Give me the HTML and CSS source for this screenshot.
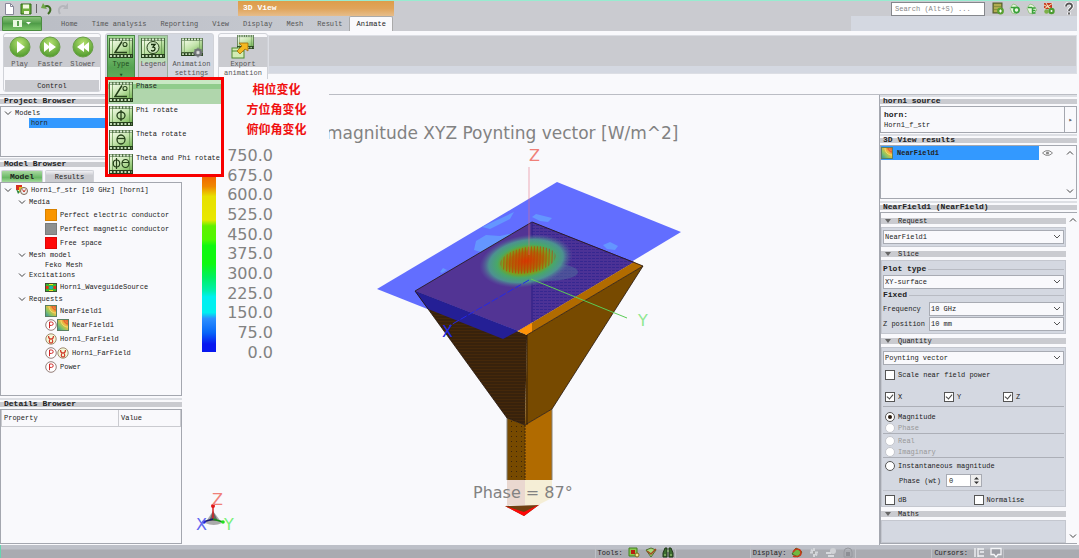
FILE: index.html
```
<!DOCTYPE html>
<html lang="en">
<head>
<meta charset="utf-8">
<title>3D View</title>
<link rel="stylesheet" href="styles.css">
</head>
<body>
<svg class="defs" aria-hidden="true">
  <defs>
    <linearGradient id="greenFill" x1="0" y1="0" x2="1" y2="1"><stop offset="0" stop-color="#f4fbe8"/><stop offset=".5" stop-color="#c4e4ac"/><stop offset="1" stop-color="#78b858"/></linearGradient>
    <radialGradient id="ball" cx=".5" cy=".3" r=".7"><stop offset="0" stop-color="#b4e070"/><stop offset="1" stop-color="#4f9a2c"/></radialGradient>
    <linearGradient id="nf" x1="0" y1="1" x2="1" y2="0"><stop offset="0" stop-color="#2f8fa8"/><stop offset=".35" stop-color="#8fc860"/><stop offset=".6" stop-color="#f0b840"/><stop offset="1" stop-color="#e04830"/></linearGradient>
    <symbol id="film" viewBox="0 0 24 20">
      <rect y="0" width="24" height="20" fill="#46683a"/>
      <rect x="1" y="3" width="22" height="13" fill="url(#greenFill)"/>
      <path d="M1 1.500h22" stroke="#dcecd4" stroke-width="2" stroke-dasharray="2.200 1.100"/>
      <rect y="16" width="24" height="4" fill="#26401c"/>
      <path d="M1 18h22" stroke="#c4dcb8" stroke-width="2" stroke-dasharray="2 1.600"/>
      <path d="M3.500 3v13M20.500 3v13" stroke="#6c9a58" stroke-width=".8"/>
    </symbol>
    <symbol id="angle" viewBox="0 0 24 20">
      <use href="#film" width="24" height="20"/>
      <path d="M13 3.500L6 14.500h12" fill="none" stroke="#25401a" stroke-width="1.500"/>
      <circle cx="16" cy="6.500" r="2" fill="none" stroke="#25401a" stroke-width="1.100"/>
    </symbol>
    <symbol id="nearfield" viewBox="0 0 12 12">
      <rect x=".5" y=".5" width="11" height="11" fill="url(#nf)" stroke="#5a8060"/>
      <path d="M4 1c0 4 3 7 7 7" fill="none" stroke="#f0e070"/><path d="M7 1c0 2 2 4 4 4" fill="none" stroke="#e05030"/>
    </symbol>
    <symbol id="power" viewBox="0 0 12 12">
      <circle cx="6" cy="6" r="5.300" fill="#fff" stroke="#7a6058" stroke-width=".8"/>
      <path d="M4.500 9.200V3h2a1.700 1.700 0 0 1 0 3.400h-2" fill="none" stroke="#d02828"/>
    </symbol>
    <symbol id="farfield" viewBox="0 0 12 12">
      <circle cx="6" cy="6" r="5.200" fill="#f4f8d8" stroke="#8a7050" stroke-width=".8"/>
      <path d="M3.500 3c0 3 1.500 3 2.500 3s2.500 0 2.500-3M6 6c-2 0-2.500 4 0 4s2-4 0-4" fill="none" stroke="#d03828" stroke-width="1.200"/>
    </symbol>
    <symbol id="chev" viewBox="0 0 8 6"><path d="M1 1.500l3 3 3-3" fill="none" stroke="#444"/></symbol>
  </defs>
</svg>

<header>
  <div class="titlebar">
    <nav class="quick" aria-label="Quick access">
      <button aria-label="New"><svg width="12" height="12" viewBox="0 0 12 12"><path d="M1.500 .5h5l3 3v8h-8z" fill="#fff" stroke="#889"/><path d="M6.500 .5v3h3" fill="none" stroke="#889"/></svg></button>
      <button aria-label="Save"><svg width="12" height="12" viewBox="0 0 12 12"><path d="M1 1h10v10H1z" fill="#6fae3c" stroke="#2f6818"/><path d="M3 1.500h6v4H3zM4 8h5v3H4z" fill="#f4f8e0"/></svg></button>
      <span class="quick-rule"></span>
      <button aria-label="Undo"><svg width="12" height="12" viewBox="0 0 12 12"><path d="M3 4c5-3 9 2 4 7" fill="none" stroke="#3c6c20" stroke-width="2"/><path d="M0 5l2-5 4 6z" fill="#6fa848"/></svg></button>
      <button aria-label="Redo"><svg width="12" height="12" viewBox="0 0 12 12"><path d="M9 4c-5-3-9 2-6 7" fill="none" stroke="#b4b6bb" stroke-width="2"/><path d="M11 0v6H6z" fill="#b4b6bb"/></svg></button>
    </nav>
    <h1 class="context-title">3D View</h1>
    <div class="titlebar-right">
      <input class="search" type="text" aria-label="Search" placeholder="Search (Alt+S) ...">
      <button aria-label="Calculator"><svg width="12" height="13" viewBox="0 0 12 13"><rect x="1" y="1" width="9" height="10" fill="#8a9040" stroke="#505a28"/><path d="M2 3h7M2 6h7M2 9h7" stroke="#d8c860"/><circle cx="8.500" cy="9" r="3.400" fill="#58a030"/><path d="M8.500 7.500v3M7 9h3" stroke="#fff"/></svg></button>
      <button aria-label="CADFEKO"><svg width="12" height="13" viewBox="0 0 12 13"><path d="M1 6l3-4 3 1 4 5-4 4-4-1z" fill="#e8f6e0" stroke="#9cc48c"/><circle cx="7.500" cy="8" r="2.600" fill="none" stroke="#38a038" stroke-width="1.600"/><path d="M2 5.500h4" stroke="#38a038" stroke-width="1.500"/></svg></button>
      <button aria-label="EDITFEKO"><svg width="12" height="13" viewBox="0 0 12 13"><path d="M1 6l3-4 3 1 4 5-4 4-4-1z" fill="#e8f6e0" stroke="#9cc48c"/><path d="M9.500 6h-3v5h3M6.500 8.500h3M2 5.500h4" fill="none" stroke="#38a038" stroke-width="1.500"/></svg></button>
      <button aria-label="Run"><svg width="12" height="13" viewBox="0 0 12 13"><path d="M1 1h8v6H1z" fill="#c83820"/><path d="M1 3l8 4M3 1l5 8M1 7l9-6" stroke="#f0e8c0"/><circle cx="8.500" cy="9" r="3.200" fill="#4c9c30"/><circle cx="3.500" cy="9.500" r="2.200" fill="#7cb048"/><circle cx="8.500" cy="9" r="1" fill="#fff"/></svg></button>
      <button class="help" aria-label="Help"><svg width="10" height="13" viewBox="0 0 10 13"><path d="M2 4.500C2 .5 8.500 .5 8 4.500 8 6.500 5 6.500 5 9M5 10.500v2" fill="none" stroke="#fff" stroke-width="3.500"/><path d="M2 4.500C2 .5 8.500 .5 8 4.500 8 6.500 5 6.500 5 9M5 10.500v2" fill="none" stroke="#555" stroke-width="1.800"/></svg></button>
    </div>
  </div>
  <nav class="tabs" aria-label="Ribbon tabs">
    <button class="app-button" aria-label="Application menu"><svg width="20" height="9" viewBox="0 0 20 9"><path d="M1 1h9v7H1z" fill="#e8f8e0"/><path d="M6 2v5" stroke="#58a050" stroke-width="2"/><path d="M14 3h5l-2.500 2.500z" fill="#fff"/></svg></button>
    <a href="#home">Home</a><a href="#time">Time analysis</a><a href="#reporting">Reporting</a><a href="#view">View</a><a href="#display">Display</a><a href="#mesh">Mesh</a><a href="#result">Result</a><a href="#animate" class="active">Animate</a>
    <span class="tabs-rest"></span>
  </nav>
  <div class="ribbon">
    <section class="group control">
      <div class="tools">
        <button><svg width="22" height="22" viewBox="0 0 22 22"><circle cx="11" cy="11" r="10" fill="url(#ball)" stroke="#6aa048"/><path d="M8 5l8 6-8 6z" fill="#fff"/></svg>Play</button>
        <button><svg width="22" height="22" viewBox="0 0 22 22"><circle cx="11" cy="11" r="10" fill="url(#ball)" stroke="#6aa048"/><path d="M5 6l5 4V6l7 5-7 5v-4l-5 4z" fill="#fff"/></svg>Faster</button>
        <button><svg width="22" height="22" viewBox="0 0 22 22"><circle cx="11" cy="11" r="10" fill="url(#ball)" stroke="#6aa048"/><path d="M17 6l-5 4V6l-7 5 7 5v-4l5 4z" fill="#fff"/></svg>Slower</button>
      </div>
      <h2>Control</h2>
    </section>
    <section class="group settings">
      <button class="type"><svg width="24" height="20"><use href="#angle" width="24" height="20"/></svg>Type<span class="caret">▾</span></button>
      <button class="legend"><svg width="24" height="20" viewBox="0 0 24 20"><use href="#film" width="24" height="20"/><circle cx="12" cy="9.500" r="6" fill="#cfe8c0" stroke="#25401a"/><path d="M10 6.500h4l-2 2.500c3 0 2.500 4-.5 4l-1.500-.6" fill="none" stroke="#18300f" stroke-width="1.300"/></svg>Legend</button>
      <button class="anim"><svg width="24" height="20" viewBox="0 0 24 20"><use href="#film" width="24" height="18"/><circle cx="18" cy="14.500" r="3" fill="#ddd" stroke="#707478" stroke-width="2"/><path d="M18 9.500v10M13 14.500h10M14.500 11l7 7M21.500 11l-7 7" stroke="#707478"/><circle cx="18" cy="14.500" r="1.500" fill="#ddd"/></svg>Animation settings</button>
    </section>
    <section class="group export">
      <button><svg width="24" height="24" viewBox="0 0 24 24"><use href="#film" x="5" width="19" height="14"/><rect x="1" y="13" width="12" height="10" fill="#d4ecb4" stroke="#4e8a30"/><path d="M1 16h12" stroke="#4e8a30"/><path d="M6 16l5-5-3-3h9v8l-3-2-5 5z" fill="#f4b820" stroke="#a06c10" stroke-width=".8"/></svg>Export animation</button>
    </section>
    <div class="ribbon-rest"></div>
  </div>
  <div class="menu" role="menu">
    <button class="hot" role="menuitem"><svg width="24" height="20"><use href="#angle" width="24" height="20"/></svg>Phase</button>
    <button role="menuitem"><svg width="24" height="20" viewBox="0 0 24 20"><use href="#film" width="24" height="20"/><ellipse cx="12" cy="9.500" rx="4" ry="3.500" fill="none" stroke="#25401a" stroke-width="1.300"/><path d="M12 4v11" stroke="#25401a" stroke-width="1.300"/></svg>Phi rotate</button>
    <button role="menuitem"><svg width="24" height="20" viewBox="0 0 24 20"><use href="#film" width="24" height="20"/><ellipse cx="12" cy="9.500" rx="4" ry="4.500" fill="none" stroke="#25401a" stroke-width="1.300"/><path d="M8 8.500h8" stroke="#25401a" stroke-width="1.300"/></svg>Theta rotate</button>
    <button role="menuitem"><svg width="24" height="20" viewBox="0 0 24 20"><use href="#film" width="24" height="20"/><ellipse cx="7.500" cy="9.500" rx="3.200" ry="3.500" fill="none" stroke="#25401a" stroke-width="1.200"/><ellipse cx="16.500" cy="9.500" rx="3.500" ry="4" fill="none" stroke="#25401a" stroke-width="1.200"/><path d="M7.500 4v11M13 8.500h7" stroke="#25401a" stroke-width="1.200"/></svg>Theta and Phi rotate</button>
  </div>
  <div class="notes" lang="zh"><p>相位变化</p><p>方位角变化</p><p>俯仰角变化</p></div>
</header>

<main>
  <aside class="dock left">
    <h2 class="dock-title">Project Browser</h2>
    <ul class="box project">
      <li class="line"><svg class="chev"><use href="#chev"/></svg>Models</li>
      <li class="line chosen">horn</li>
    </ul>
    <h2 class="dock-title model-title">Model Browser</h2>
    <div class="panel-tabs"><button class="on">Model</button><button>Results</button></div>
    <ul class="box tree">
      <li class="mid l0"><svg class="chev"><use href="#chev"/></svg><svg width="13" height="12" viewBox="0 0 13 12"><path d="M1 1h6v5H1z" fill="#d83020"/><path d="M4 3h5v5H4z" fill="#e8c020"/><path d="M1 5l4 3-2 2z" fill="#308840"/><circle cx="9" cy="7" r="3.500" fill="#eee" stroke="#806858"/><path d="M7.500 5.500L9 8l1.500-2.500" fill="none" stroke="#c83020"/></svg>Horn1_f_str [10 GHz] [horn1]</li>
      <li class="mid l1"><svg class="chev"><use href="#chev"/></svg>Media</li>
      <li class="tall l2"><i class="swatch pec"></i>Perfect electric conductor</li>
      <li class="tall l2"><i class="swatch pmc"></i>Perfect magnetic conductor</li>
      <li class="tall l2"><i class="swatch free"></i>Free space</li>
      <li class="line l1"><svg class="chev"><use href="#chev"/></svg>Mesh model</li>
      <li class="line l2">Feko Mesh</li>
      <li class="line l1"><svg class="chev"><use href="#chev"/></svg>Excitations</li>
      <li class="tall l2"><svg width="12" height="9" viewBox="0 0 12 9"><rect x=".5" y=".5" width="11" height="8" fill="#38b830" stroke="#405030"/><rect x="1" y="3" width="2.500" height="3" fill="#e83018"/><rect x="8.500" y="3" width="2.500" height="3" fill="#e83018"/><ellipse cx="6" cy="4.500" rx="2" ry="1.500" fill="#20b0c0"/><path d="M4 1.500h4M4 7.500h4" stroke="#f0e020"/></svg>Horn1_WaveguideSource</li>
      <li class="line l1"><svg class="chev"><use href="#chev"/></svg>Requests</li>
      <li class="tall l2"><svg width="12" height="12"><use href="#nearfield"/></svg>NearField1</li>
      <li class="tall l2"><span class="pair"><svg width="12" height="12"><use href="#power"/></svg><svg width="12" height="12"><use href="#nearfield"/></svg></span>NearField1</li>
      <li class="tall l2"><svg width="12" height="12"><use href="#farfield"/></svg>Horn1_FarField</li>
      <li class="tall l2"><span class="pair"><svg width="12" height="12"><use href="#power"/></svg><svg width="12" height="12"><use href="#farfield"/></svg></span>Horn1_FarField</li>
      <li class="tall l2"><svg width="12" height="12"><use href="#power"/></svg>Power</li>
    </ul>
    <h2 class="dock-title details-title">Details Browser</h2>
    <div class="box details"><table><thead><tr><th class="prop">Property</th><th>Value</th></tr></thead></table></div>
  </aside>

  <section class="view" aria-label="3D view">
    <svg class="scene" viewBox="182 95 697 450">
      <defs>
        <linearGradient id="scale" x1="0" y1="0" x2="0" y2="1">
          <stop offset="0" stop-color="#f00000"/><stop offset=".11" stop-color="#f06800"/><stop offset=".16" stop-color="#f08800"/><stop offset=".21" stop-color="#e8e000"/><stop offset=".33" stop-color="#e8e800"/><stop offset=".36" stop-color="#60f000"/><stop offset=".43" stop-color="#50f800"/><stop offset=".46" stop-color="#10f810"/><stop offset=".55" stop-color="#10f810"/><stop offset=".62" stop-color="#00f060"/><stop offset=".69" stop-color="#00f0b0"/><stop offset=".72" stop-color="#00f0f0"/><stop offset=".8" stop-color="#00f0f0"/><stop offset=".83" stop-color="#2c90ff"/><stop offset=".9" stop-color="#0868f8"/><stop offset=".96" stop-color="#0818f0"/><stop offset="1" stop-color="#0818f0"/>
        </linearGradient>
        <radialGradient id="heat"><stop offset="0" stop-color="#d83800"/><stop offset=".35" stop-color="#a86c08"/><stop offset=".5" stop-color="#78a020"/><stop offset=".62" stop-color="#48a868"/><stop offset=".8" stop-color="#4c9c90" stop-opacity=".9"/><stop offset="1" stop-color="#5a60a0" stop-opacity="0"/></radialGradient>
        <pattern id="rows" width="3" height="3" patternUnits="userSpaceOnUse"><path d="M0 .5h3" stroke="#4e2c08"/></pattern>
        <pattern id="mesh" width="4" height="3" patternUnits="userSpaceOnUse"><path d="M0 .5h4" stroke="#28208c" stroke-dasharray="3 1"/></pattern>
        <pattern id="dots" width="5" height="5" patternUnits="userSpaceOnUse"><path d="M1 1h1v1H1z" fill="#3a240c"/></pattern>
        <pattern id="ripple" width="3" height="8" patternUnits="userSpaceOnUse" patternTransform="rotate(12)"><path d="M.5 0v8" stroke="#c83000"/></pattern>
      </defs>
      <text class="headline" x="326" y="139">magnitude XYZ Poynting vector [W/m^2]</text>
      <g class="readout" text-anchor="end">
        <text x="273" y="161">750.0</text><text x="273" y="181">675.0</text><text x="273" y="200">600.0</text><text x="273" y="220">525.0</text><text x="273" y="240">450.0</text><text x="273" y="259">375.0</text><text x="273" y="279">300.0</text><text x="273" y="299">225.0</text><text x="273" y="318">150.0</text><text x="273" y="338">75.0</text><text x="273" y="358">0.0</text>
      </g>
      <rect x="202" y="155" width="14" height="197" fill="url(#scale)"/>
      <path d="M377 289L557 182 681 232 503 339z" fill="#626eff"/>
      <g fill="#6496ff"><path d="M474 250l2-9 10-6 14 1 18-4-20 17-14 4z"/><path d="M482 227l32-15-4 7-20 10z"/><path d="M532 217l4-3 8 2 8 2-4 4-8-1z"/><path d="M603 245l7-3 8 4-3 4-8-1z"/><path d="M440 272l3-4 4 2-5 3z"/></g>
      <path d="M415 291L527 335 525 425 507 418z" fill="#38220c"/><path d="M415 291L527 335 525 425 507 418z" fill="url(#rows)" opacity=".6"/>
      <path d="M527 335L643 266 552 409 525 425z" fill="#774a00"/>
      <path d="M507 418l18 7v55h-18z" fill="#774a00"/><path d="M507 418l18 7v55h-18z" fill="url(#dots)"/>
      <path d="M525 425l27-16v71h-27z" fill="#b16b00"/>
      <path d="M507 418v62M552 409v71" stroke="#85837c"/>
      <path d="M525 425V480" stroke="#3a240c" stroke-dasharray="2 1"/>
      <path d="M415 291L532 222 634 262 518 331z" fill="#523494"/>
      <path d="M532 222L634 262 533 322z" fill="#4c3296"/><path d="M532 222L634 262 533 322z" fill="url(#mesh)" opacity=".6"/>
      <path d="M415 291L428 309 503 339 518 331z" fill="#241f95"/>
      <path d="M634 262l9 4-116 69-9-4z" fill="#b16b00"/><path d="M518 331l14-8v9l-5 3z" fill="#ff9308"/>
      <path d="M415 291L532 222 643 266 527 335V425M643 266l-91 143-27 16-18-7-92-127" fill="none" stroke="#24150c" stroke-width=".8"/>
      <path d="M532 222V322" stroke="#281c84"/>
      <ellipse cx="548" cy="272" rx="30" ry="9" fill="#50709c" opacity=".5"/>
      <ellipse cx="526" cy="261" rx="47" ry="26" fill="url(#heat)" transform="rotate(-10 526 261)"/>
      <ellipse cx="528" cy="260" rx="28" ry="13" fill="url(#ripple)" opacity=".6" transform="rotate(-10 528 260)"/>
      <path d="M529 167v88" stroke="#e87080" stroke-opacity=".55"/>
      <path d="M531 279l96 39" stroke="#5bcc55"/><path d="M529 280l-80 46" stroke="#2428e8" stroke-dasharray="7 2"/>
      <g class="axis"><text x="529" y="161" fill="#f08078">Z</text><text x="638" y="326" fill="#90e890">Y</text><text x="442" y="337" fill="#2028e0">X</text></g>
      <path d="M505 506l34-1-15 11z" fill="#704010"/><path d="M505 506l19 6 16-8-16 12z" fill="#ff0808"/>
      <path d="M507 480h45v18l-14 7h-31z" fill="#f5eed6"/><path d="M507 480h18v25h-18z" fill="#ead8d0"/>
      <text class="readout" x="473" y="498">Phase = 87°</text>
      <path d="M205 523l8-12 9 12q-8 4-17 0z" fill="#aaa"/><path d="M209 521l4-10 5 10z" fill="#666"/>
      <path d="M213 519v-13" stroke="#d82020" stroke-width="1.500"/><path d="M213 519l10 3" stroke="#189018" stroke-width="1.500"/><path d="M213 519l-10 3" stroke="#181870" stroke-width="1.500"/>
      <circle cx="213" cy="506" r="2" fill="#e01818"/><circle cx="223" cy="522" r="1.800" fill="#20e020"/><circle cx="204" cy="522" r="1.800" fill="#1820e0"/>
      <g class="axis"><text x="212" y="505" fill="#f08078">Z</text><text x="224" y="530" fill="#78f078">Y</text><text x="196" y="530" fill="#6068f0">X</text></g>
    </svg>
  </section>

  <aside class="dock right">
    <h2 class="dock-title">horn1 source</h2>
    <div class="box source"><p><b>horn:</b><br>Horn1_f_str</p><button aria-label="More">▸</button></div>
    <h2 class="dock-title">3D View results</h2>
    <div class="box results">
      <div class="result"><svg width="12" height="12"><use href="#nearfield"/></svg>NearField1</div>
      <svg class="eye" width="11" height="8" viewBox="0 0 11 8"><path d="M.5 4q5-5 10 0-5 5-10 0z" fill="none" stroke="#888"/><circle cx="5.500" cy="4" r="1.600" fill="#888"/></svg>
      <div class="scroll"><svg class="chev up"><use href="#chev"/></svg><svg class="chev"><use href="#chev"/></svg></div>
    </div>
    <h2 class="dock-title">NearField1 (NearField)</h2>
    <div class="box props">
      <form>
        <h3>Request</h3>
        <fieldset><select aria-label="Request"><option>NearField1</option></select></fieldset>
        <h3>Slice</h3>
        <fieldset>
          <h4><label for="plot">Plot type</label></h4>
          <select id="plot"><option>XY-surface</option></select>
          <h4>Fixed</h4>
          <div class="field"><label for="freq">Frequency</label><select id="freq"><option>10 GHz</option></select></div>
          <div class="field"><label for="zpos">Z position</label><select id="zpos"><option>10 mm</option></select></div>
        </fieldset>
        <h3>Quantity</h3>
        <fieldset class="quantity">
          <select aria-label="Quantity"><option>Poynting vector</option></select>
          <label class="check scale"><input type="checkbox">Scale near field power</label>
          <div class="axes"><label class="check"><input type="checkbox" checked>X</label><label class="check"><input type="checkbox" checked>Y</label><label class="check"><input type="checkbox" checked>Z</label></div>
          <div class="radios"><label class="check"><input type="radio" name="part" checked>Magnitude</label><label class="check off"><input type="radio" name="part" disabled>Phase</label></div>
          <div class="radios"><label class="check off"><input type="radio" name="part" disabled>Real</label><label class="check off"><input type="radio" name="part" disabled>Imaginary</label></div>
          <div class="radios instant"><label class="check"><input type="radio" name="part">Instantaneous magnitude</label>
            <div class="spin"><label for="wt">Phase (wt)</label><input id="wt" type="text" value="0"><button type="button" aria-label="Step"><svg width="7" height="9" viewBox="0 0 7 9"><path d="M1 3.500L3.500 1 6 3.500zM1 5.500L3.500 8 6 5.500z" fill="#333"/></svg></button></div></div>
          <div class="pair-checks"><label class="check"><input type="checkbox">dB</label><label class="check"><input type="checkbox">Normalise</label></div>
        </fieldset>
        <h3>Maths</h3>
        <fieldset class="maths"></fieldset>
      </form>
      <div class="scroll"><svg class="chev up"><use href="#chev"/></svg><svg class="chev"><use href="#chev"/></svg></div>
    </div>
  </aside>
</main>

<footer>
  <div class="status">Tools:
    <svg width="12" height="11" viewBox="0 0 12 11"><path d="M1 1h8v8H1z" fill="#8cc850" stroke="#408020"/><rect x="3" y="3" width="4" height="4" fill="#b82010"/><circle cx="9" cy="8" r="2" fill="#f0e890" stroke="#806820"/></svg>
    <svg width="12" height="11" viewBox="0 0 12 11"><path d="M1 3l5-2 5 2-5 7z" fill="#a8d878" stroke="#507030"/><path d="M2 4l4 3 5-5" fill="none" stroke="#a04820" stroke-width="1.500"/></svg>
    <svg width="12" height="11" viewBox="0 0 12 11"><path d="M1 10V6l2-5h2v9zM7 10V1h2l2 5v4z" fill="#3c6c30" stroke="#203818"/><path d="M5 4h2M2 8h2M8 8h2" stroke="#a8d880"/></svg>
  </div>
  <div class="status display">Display:
    <svg width="12" height="11" viewBox="0 0 12 11"><path d="M1 7l4-6 6 4-4 5z" fill="#70b840" stroke="#406820"/><path d="M2 5c3-5 8-3 8 1s-6 4-8 3" fill="none" stroke="#c83818" stroke-width="1.500"/></svg>
    <svg width="12" height="11" viewBox="0 0 12 11"><path d="M6 1v9M2 5.500h8M3 2.500l6 6" stroke="#d4d6da" stroke-width="2"/><path d="M6 4v3" stroke="#777"/></svg>
    <svg width="12" height="11" viewBox="0 0 12 11"><circle cx="8" cy="4" r="3" fill="#d0d2d6"/><path d="M1 6h5M3 9h6" stroke="#d8dade" stroke-width="2"/></svg>
    <svg width="12" height="11" viewBox="0 0 12 11"><path d="M2 10V5a4 4 0 0 1 8 0v5z" fill="none" stroke="#96989e"/><rect x="4" y="5" width="4" height="4" fill="#8c8e94"/></svg>
  </div>
  <div class="status cursors">Cursors:
    <svg width="12" height="11" viewBox="0 0 12 11"><path d="M2 1v9M5 1v9M5 2h6M7 5h4M5 9h6" stroke="#f0f1f4" stroke-width="1.400"/></svg>
    <svg width="12" height="11" viewBox="0 0 12 11"><path d="M1 1.500h10v6H8L6 10 4 7.500H1z" fill="#9a9ca4" stroke="#f4f5f8" stroke-width="1.300"/></svg>
  </div>
</footer>
</body>
</html>
```
FILE: styles.css
```
* { box-sizing: border-box; margin: 0; padding: 0; }

:root {
  --paper: #f9f9fc;
  --panel: #d4d8e1;
  --band: #cacbd0;
  --edge: #a4a7af;
  --ink: #222;
}

body {
  display: flex;
  flex-direction: column;
  height: 100vh;
  overflow: hidden;
  background: var(--paper);
  color: var(--ink);
  font: 7px/10px "Liberation Mono", monospace;
}

button, input, select { font: inherit; color: inherit; }
button { border: 0; background: none; }
ul { list-style: none; }
svg { flex: none; display: block; }
.defs { position: absolute; width: 0; height: 0; }
.chev { width: 8px; height: 6px; }
.up { transform: rotate(180deg); }

header { position: relative; padding-right: 2px; border-top: 1px solid #98ecd0; flex: none; }

/* title bar */
.titlebar { display: flex; height: 15px; background: var(--band); }
.quick { display: flex; align-items: center; width: 238px; padding-left: 4px; gap: 4px; }
.quick-rule { width: 1px; height: 9px; background: #666; }
.context-title { width: 156px; padding-left: 5px; font-size: 8px; line-height: 14px; color: #fff; background: linear-gradient(#dd9d4b, #e0a45a 50%, #e6bd8b); }
.titlebar-right { display: flex; flex: 1; justify-content: flex-end; align-items: center; gap: 5px; padding-right: 3px; }
.search { width: 94px; height: 14px; margin-right: 2px; padding-left: 3px; border: 1px solid #85878c; background: #fff; }
.search::placeholder { color: #888; }
.help { margin-left: 4px; }

/* ribbon tabs */
.tabs { display: flex; height: 15px; background: linear-gradient(90deg, #b9bcc4, #c6c9d0 30%, var(--band) 40%); }
.tabs a { padding: 0 7px; color: #555; line-height: 17px; text-decoration: none; white-space: nowrap; }
.app-button { display: flex; justify-content: center; align-items: center; width: 40px; margin: 0 12px 0 2px; border: 1px solid #4b8c40; border-radius: 2px 2px 0 0; background: linear-gradient(#8cc47c, #4f9c48 50%, #79c468); }
.tabs a.active { padding: 0 6px; color: #222; background: var(--paper); border: 1px solid #aaa; border-bottom: 0; line-height: 15px; border-radius: 2px 2px 0 0; }
.tabs-rest { flex: 1; background: linear-gradient(90deg, var(--band) 458px, var(--panel) 458px); }

/* ribbon */
.ribbon { display: flex; gap: 4px; height: 64px; padding: 2px 0 2px 3px; background: var(--paper); border-bottom: 1px solid #bbbdc4; }
.group { display: flex; border: 1px solid #d0d2d8; border-radius: 3px; }
.group button { display: flex; flex-direction: column; align-items: center; line-height: 9px; color: #555; }
.control { flex-direction: column; justify-content: space-between; width: 98px; padding: 2px 1px 0; background: linear-gradient(var(--paper) 3px, var(--band) 3px 33px, var(--paper) 33px); }
.control h2 { padding-top: 1px; font-size: 7px; font-weight: 400; text-align: center; line-height: 10px; background: var(--band); }
.tools { display: flex; justify-content: space-around; }
.tools svg { margin-bottom: 2px; }
.settings { gap: 3px; width: 109px; padding: 1px; background: var(--panel); }
.settings svg { margin: 2px 0 2px; }
.settings .type { width: 28px; border: 1px solid #498a45; background: linear-gradient(#9ed890, #55a352 60%, #6ab464); color: #214c1e; }
.settings .legend { width: 30px; border: 1px solid #98ac98; background: linear-gradient(#a4d2a0, #bedcba 50%, var(--band) 51%); }
.settings .anim { width: 41px; padding-top: 1px; }
.caret { line-height: 12px; }
.export { width: 50px; background: linear-gradient(var(--paper) 3px, var(--band) 3px 33px, var(--paper) 33px); }
.export button { padding-top: 1px; }
.export svg { margin-bottom: 1px; }
.ribbon-rest { flex: 1; margin: 2px 0 18px -4px; border: 1px solid #dcdee4; background: linear-gradient(var(--band) 30px, var(--panel) 30px); }

/* drop-down over the ribbon and docks */
.menu { position: absolute; z-index: 2; left: 105px; top: 76px; width: 119px; border: 3px solid #f80000; background: var(--paper); }
.menu button { display: flex; gap: 3px; width: 100%; height: 24px; padding: 2px 0 0 1px; line-height: 9px; white-space: nowrap; }
.menu button:last-child { height: 22px; }
.menu .hot { background: linear-gradient(#c8e8c4 4px, #90cc8c 4px 9px, #b0d6ac 9px); }
.notes { position: absolute; z-index: 1; left: 224px; top: 78px; width: 105px; padding-top: 1px; background: var(--paper); color: #f01010; font: bold 12px/20px "Liberation Sans", "Noto Sans CJK SC", sans-serif; text-align: center; }

/* docks */
main { display: flex; flex: 1; min-height: 0; }
.dock { display: flex; flex-direction: column; flex: none; }
.left { width: 182px; padding-bottom: 1px; }
.right { width: 200px; padding: 0 2px 1px 0; border-left: 1px solid var(--edge); }
.dock-title { height: 11px; padding-left: 4px; font-size: 8px; line-height: 11px; background: linear-gradient(#dddfe4 2px, var(--paper) 2px 4px, var(--band) 4px 9px, var(--paper) 9px); }
.right .dock-title { padding-left: 3px; }
.box { border: 1px solid var(--edge); background: var(--paper); }
.line, .mid, .tall { display: flex; align-items: center; gap: 3px; white-space: nowrap; }
.line { height: 10px; }
.mid { height: 12px; }
.tall { height: 14px; }
.l0 { padding-left: 3px; }
.l1 { padding-left: 17px; }
.l2 { padding-left: 44px; }
.project { height: 51px; padding: 1px 0 0 3px; }
.project .chosen { margin-left: 25px; padding-left: 2px; background: #3399ff; }
.model-title { margin-top: 1px; }
.panel-tabs { display: flex; gap: 2px; height: 13px; padding: 1px 0 0 1px; }
.panel-tabs button { width: 49px; border: 1px solid #d0d2d8; border-bottom: 0; border-radius: 2px 2px 0 0; background: linear-gradient(#f0f0f4, var(--band) 40%); }
.panel-tabs .on { width: 42px; background: linear-gradient(#a8d8a0, #68b864 60%, #a4d89c); font-size: 8px; font-weight: 700; }
.tree { flex: 1; padding-top: 1px; }
.swatch { width: 12px; height: 12px; border: 1px solid #0002; }
.pec { background: #f99500; }
.pmc { background: #8d9090; }
.free { background: #ff0808; }
.pair { display: flex; }
.details-title { margin-top: 2px; }
.details { height: 135px; }
table { width: 100%; border-collapse: collapse; }
th { height: 16px; padding-left: 2px; border: 1px solid var(--band); border-top: 0; font-weight: 400; text-align: left; }
.prop { width: 117px; }

/* scene */
.view { flex: 1; min-width: 0; background: var(--paper); }
.scene { width: 100%; height: 100%; }
.readout, .axis { font: 16px "DejaVu Sans", sans-serif; }
.headline { font: 17px "DejaVu Sans", sans-serif; }
.readout, .headline { fill: #828282; }

/* right dock */
.source { display: flex; height: 27px; margin-bottom: 1px; padding-left: 3px; }
.source p { flex: 1; padding-top: 3px; }
.source b { font-size: 8px; }
.source button { width: 12px; border-left: 1px solid var(--edge); color: #666; }
.results { display: flex; height: 54px; margin-bottom: 2px; }
.result { display: flex; flex: 1; align-items: center; gap: 4px; height: 14px; background: #3399ff; font-weight: 700; }
.eye { margin: 3px 3px 0 3px; }
.scroll { display: flex; flex-direction: column; justify-content: space-between; align-items: center; width: 12px; margin-left: auto; padding: 4px 0; }
.results .scroll { width: 20px; padding-left: 8px; }
.props { display: flex; flex: 1; min-height: 0; overflow: hidden; border-right: 0; }
form { display: flex; flex-direction: column; flex: 1; padding: 3px 2px 0 0; }
h3 { position: relative; height: 10px; padding-left: 17px; font-size: 7px; font-weight: 400; line-height: 10px; background: linear-gradient(var(--paper) 2px, var(--band) 2px 8px, var(--paper) 8px); }
h3::before { content: ""; position: absolute; left: 4px; top: 3px; border: 3px solid transparent; border-top: 4px solid #666; border-bottom: 0; }
fieldset { display: flex; flex-direction: column; min-width: 0; margin: 1px 0 2px; padding: 2px 1px; border: 1px solid #c4c7cf; background: var(--panel); }
fieldset select { width: 100%; height: 14px; padding-left: 1px; border: 1px solid #a8abb3; border-radius: 0; appearance: none; background: var(--paper) url("data:image/svg+xml,%3Csvg xmlns='http://www.w3.org/2000/svg' width='8' height='6'%3E%3Cpath d='M1 1l3 3 3-3' fill='none' stroke='%23555'/%3E%3C/svg%3E") no-repeat right 2px center; }
h4 { display: flex; align-items: center; gap: 2px; height: 12px; font-size: 8px; }
h4::after { content: ""; flex: 1; height: 1px; background: #b8bbc3; }
.field { display: flex; align-items: center; margin-top: 1px; }
.field label { flex: none; width: 46px; }
.quantity { padding-top: 3px; }
.check { display: flex; align-items: center; gap: 3px; height: 12px; }
.check input { position: relative; width: 10px; height: 10px; flex: none; appearance: none; border: 1px solid #555; background: #fff; }
.check input[type="radio"] { border-radius: 50%; }
.check input[type="checkbox"]:checked::after { content: ""; position: absolute; left: 2px; top: 0; width: 3px; height: 5px; border: solid #444; border-width: 0 1px 1px 0; transform: rotate(40deg); }
.check input[type="radio"]:checked::after { content: ""; position: absolute; inset: 2px; border-radius: 50%; background: #2a1c10; }
.off { color: #999; }
.check.off input { border-color: #c4c6cc; }
.scale { margin: 4px 2px 10px; }
.axes { display: grid; grid-template-columns: repeat(3, 59px); padding: 0 2px 3px; }
.radios { padding: 1px 2px 0; border-top: 1px solid #acafb7; }
.radios .check { height: 11px; }
.axes + .radios { padding-top: 4px; }
.instant { padding: 2px 2px 3px; }
.instant .check { margin-bottom: 3px; }
.spin { display: flex; align-items: center; padding-left: 14px; }
.spin label { width: 47px; }
.spin input { width: 25px; height: 13px; padding-left: 2px; border: 1px solid #a8abb3; background: #fff; }
.spin button { display: flex; justify-content: center; align-items: center; width: 11px; height: 13px; border: 1px solid #a8abb3; border-left: 0; background: #eee; }
.pair-checks { display: grid; grid-template-columns: 1fr 1fr; padding: 3px 2px 0; border-top: 1px solid #c0c3cb; }
.quantity { padding-bottom: 0; }
.maths { flex: 1; margin-bottom: 0; }

/* status bar */
footer { display: flex; flex: none; justify-content: flex-end; height: 13px; padding-right: 75px; border-left: 1px solid #68d4b0; background: linear-gradient(#bdc0c8 4px, #a9abb1 5px); }
.status { display: flex; align-items: center; gap: 5px; padding: 2px 1px 0 2px; border: solid #bfc1c7; border-width: 0 1px; }
.display { margin-left: 74px; }
.cursors { margin-left: 75px; }
```
